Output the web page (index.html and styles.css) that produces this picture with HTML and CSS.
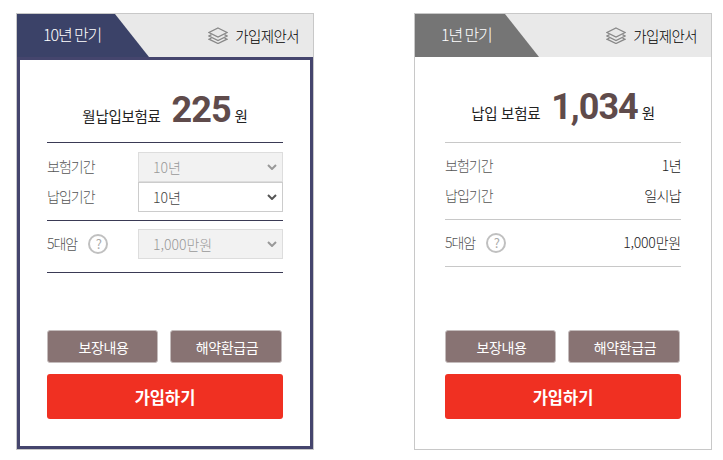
FILE: index.html
```html
<!DOCTYPE html>
<html lang="ko">
<head>
  <meta charset="UTF-8" />
  <title>보험료 계산</title>
  <link rel="stylesheet" href="styles.css">
</head>
<body>

  <div class="cards">

    <!-- 10년 만기 -->
    <div class="card active">
      <div class="card-head">
        <div class="tab">10년 만기</div>
        <a href="#" class="proposal">
          <svg class="layers" viewBox="0 0 20 17" width="20" height="17">
            <path d="M10 1 L19 5.5 L10 10 L1 5.5 Z" />
            <path d="M3.5 7.7 L1 9 L10 13.5 L19 9 L16.5 7.7" />
            <path d="M3.5 11 L1 12.2 L10 16.5 L19 12.2 L16.5 11" />
          </svg>
          가입제안서
        </a>
      </div>
      <div class="card-body">
        <div class="price">
          <span class="price-label">월납입보험료</span>
          <strong>225</strong>
          <span class="price-unit">원</span>
        </div>
        <div class="group">
          <div class="row">
            <label>보험기간</label>
            <select disabled><option>10년</option></select>
          </div>
          <div class="row">
            <label>납입기간</label>
            <select><option>10년</option></select>
          </div>
        </div>
        <div class="group single">
          <div class="row">
            <label>5대암 <span class="help">?</span></label>
            <select disabled><option>1,000만원</option></select>
          </div>
        </div>
        <div class="actions">
          <div class="sub-btns">
            <button>보장내용</button>
            <button>해약환급금</button>
          </div>
          <button class="join">가입하기</button>
        </div>
      </div>
    </div>

    <!-- 1년 만기 -->
    <div class="card">
      <div class="card-head">
        <div class="tab">1년 만기</div>
        <a href="#" class="proposal">
          <svg class="layers" viewBox="0 0 20 17" width="20" height="17">
            <path d="M10 1 L19 5.5 L10 10 L1 5.5 Z" />
            <path d="M3.5 7.7 L1 9 L10 13.5 L19 9 L16.5 7.7" />
            <path d="M3.5 11 L1 12.2 L10 16.5 L19 12.2 L16.5 11" />
          </svg>
          가입제안서
        </a>
      </div>
      <div class="card-body">
        <div class="price">
          <span class="price-label">납입 보험료</span>
          <strong>1,034</strong>
          <span class="price-unit">원</span>
        </div>
        <div class="group">
          <div class="row text">
            <label>보험기간</label>
            <span>1년</span>
          </div>
          <div class="row text">
            <label>납입기간</label>
            <span>일시납</span>
          </div>
        </div>
        <div class="group single">
          <div class="row text">
            <label>5대암 <span class="help">?</span></label>
            <span class="amount">1,000만원</span>
          </div>
        </div>
        <div class="actions">
          <div class="sub-btns">
            <button>보장내용</button>
            <button>해약환급금</button>
          </div>
          <button class="join">가입하기</button>
        </div>
      </div>
    </div>

  </div>

</body>
</html>
```

FILE: styles.css
```css
* { box-sizing: border-box; }
body {
  margin: 0;
  padding: 13px 0 0 16px;
  font-family: 'Noto Sans CJK KR', 'Noto Sans', sans-serif;
  font-weight: 300;
  background: #fff;
  color: #222;
}
.cards {
  display: flex;
  gap: 100px;
}
.card {
  width: 298px;
  height: 437px;
  border: 1px solid #c8c8c8;
  display: flex;
  flex-direction: column;
}
.card-head {
  height: 43px;
  flex: none;
  background: #e9e9e9;
  display: flex;
  justify-content: space-between;
  align-items: center;
}
.tab {
  width: 124px;
  height: 43px;
  padding-left: 26px;
  background: #757575;
  color: #fff;
  font-size: 16px;
  line-height: 40px;
  letter-spacing: -1.1px;
  word-spacing: -1px;
  clip-path: polygon(0 0, 90px 0, 124px 100%, 0 100%);
}
.proposal {
  display: flex;
  align-items: center;
  gap: 7px;
  padding-right: 14px;
  color: #000;
  font-size: 14.5px;
  letter-spacing: -0.6px;
  text-decoration: none;
}
.layers {
  fill: none;
  stroke: #888;
  stroke-width: 1.3;
}
.card-body {
  flex: 1;
  padding: 0 30px;
  display: flex;
  flex-direction: column;
}
.price {
  height: 86px;
  padding-top: 29px;
  border-bottom: 1px solid #c8c8c8;
  display: flex;
  justify-content: center;
  align-items: baseline;
  font-size: 14.5px;
  font-weight: 400;
  letter-spacing: -0.3px;
}
.price strong {
  margin: 0 4px 0 11px;
  font-family: Roboto, sans-serif;
  font-size: 36px;
  font-weight: 700;
  color: #5f4b4b;
  letter-spacing: -1px;
}
.group {
  padding: 8px 0 8px;
  border-bottom: 1px solid #c8c8c8;
}
.group.single { padding: 8px 0 8px; }
.row {
  display: flex;
  justify-content: space-between;
  align-items: center;
  height: 30px;
  font-size: 14px;
  letter-spacing: -0.6px;
}
.row label {
  color: #555;
  letter-spacing: -1px;
  padding-bottom: 2px;
  display: flex;
  align-items: center;
  gap: 11px;
}
.row span {
  padding-bottom: 2px;
}
.row .amount { letter-spacing: -0.2px; }
.help {
  width: 20px;
  height: 20px;
  margin-top: 2px;
  border: 2px solid #c0c0c0;
  border-radius: 50%;
  color: #aaa;
  font-size: 13px;
  font-weight: 400;
  line-height: 16px;
  text-align: center;
}
.row span.help { padding: 0; }
.row select {
  appearance: none;
  width: 145px;
  height: 30px;
  padding-left: 14px;
  border: 1px solid #ccc;
  border-radius: 0;
  background: #fff url("data:image/svg+xml,%3Csvg xmlns='http://www.w3.org/2000/svg' width='10' height='6'%3E%3Cpath d='M1 1l4 4 4-4' fill='none' stroke='%23555' stroke-width='2'/%3E%3C/svg%3E") no-repeat right 5px center;
  color: #444;
  font-family: inherit;
  font-size: 14px;
  font-weight: 300;
}
.row select:disabled {
  border-color: #ddd;
  background-color: #f2f2f2;
  background-image: url("data:image/svg+xml,%3Csvg xmlns='http://www.w3.org/2000/svg' width='10' height='6'%3E%3Cpath d='M1 1l4 4 4-4' fill='none' stroke='%23999' stroke-width='2'/%3E%3C/svg%3E");
  color: #999;
  opacity: 1;
}
.actions {
  margin-top: auto;
  padding-bottom: 30px;
}
.sub-btns {
  display: flex;
  gap: 12px;
  margin-bottom: 11px;
}
button {
  font-family: inherit;
  border: none;
  cursor: pointer;
}
.sub-btns button {
  width: 111px;
  height: 33px;
  padding: 0 0 0 2px;
  border: 1px solid #c4bcbc;
  border-radius: 3px;
  background: #887373;
  color: #fff;
  font-size: 14px;
  font-weight: 400;
  letter-spacing: -0.4px;
}
.sub-btns button + button { width: 112px; }
.join {
  display: block;
  width: 100%;
  height: 45px;
  border-radius: 3px;
  background: #f03022;
  color: #fff;
  font-size: 16.5px;
  font-weight: 700;
}

/* selected card */
.card.active .tab {
  background: #3b4268;
  width: 132px;
  clip-path: polygon(0 0, 98px 0, 132px 100%, 0 100%);
}
.card.active .card-body {
  border: 3px solid #45456d;
  padding: 0 27px;
}
.card.active .price,
.card.active .group {
  border-bottom-color: #3a3a55;
}
.card.active .price { height: 83px; }
.card.active .group { padding: 9px 0 8px; }
.card.active .group.single { padding: 8px 0 13px; }
.card.active .actions { padding-bottom: 27px; }
```
